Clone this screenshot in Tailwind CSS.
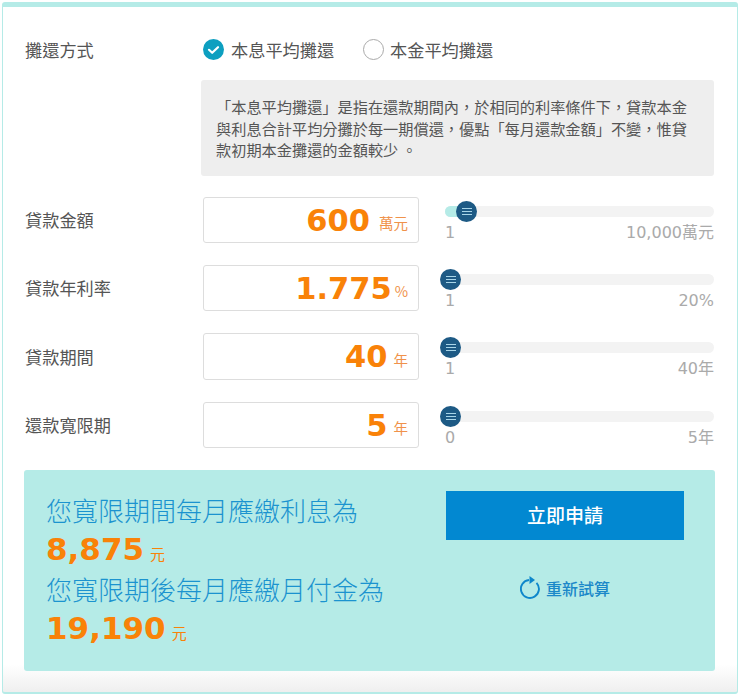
<!DOCTYPE html>
<html lang="zh-Hant">
<head>
    <meta charset="UTF-8">
    <meta name="viewport" content="width=device-width, initial-scale=1.0">
    <title>貸款試算</title>
    <script src="https://cdn.jsdelivr.net/npm/@tailwindcss/browser@4"></script>
</head>
<body class="bg-white font-['Noto_Sans_CJK_TC','Noto_Sans_CJK_SC',sans-serif] text-[#555] overflow-hidden">
    <div class="ml-[2px] mt-[2px] w-[736px] h-[692px] rounded-[3px] border border-[#b5ebe7] border-t-[5px] border-b-2 bg-gradient-to-b from-white from-[96%] to-[#efefef] px-[21px] pt-[28px]">

        <!-- repayment type -->
        <div class="flex items-center h-[30px]">
            <div class="w-[179px] pl-[1px] text-[17.2px]">攤還方式</div>
            <label class="flex items-center gap-[7px] text-[17.2px] w-[160px]">
                <svg class="w-[21px] h-[21px]" viewBox="0 0 21 21">
                    <circle cx="10.5" cy="10.5" r="10.5" fill="#0d9fc0"/>
                    <path d="M6 10.8l3.2 3 5.8-5.6" fill="none" stroke="#fff" stroke-width="2.2" stroke-linecap="round" stroke-linejoin="round"/>
                </svg>
                本息平均攤還
            </label>
            <label class="flex items-center gap-[6px] text-[17.2px]">
                <span class="w-[21px] h-[21px] rounded-full border border-[#aaa] bg-white"></span>
                本金平均攤還
            </label>
        </div>
        <div class="ml-[177px] mt-[15px] w-[513px] h-[96px] rounded-[3px] bg-[#eeeeee] pl-[15px] pr-[24px] pt-[16px] text-[15.2px] leading-[21.5px]">
            「本息平均攤還」是指在還款期間內，於相同的利率條件下，貸款本金與利息合計平均分攤於每一期償還，優點「每月還款金額」不變，惟貸款初期本金攤還的金額較少 。
        </div>

        <!-- inputs -->
        <div class="mt-[20.8px] flex flex-col gap-[22px]">
            <div class="flex items-center h-[46.3px]">
                <div class="w-[179px] pl-[1px] text-[17.2px]">貸款金額</div>
                <div class="w-[216px] h-full rounded-[3px] border border-[#ddd] flex items-center justify-end pr-[10px]">
                    <span class="pt-[2px] font-['DejaVu_Sans'] font-bold text-[30.5px] text-[#f98208] leading-none">600</span>
                    <span class="ml-[9px] mt-[6px] text-[14.5px] text-[#f0924a]">萬元</span>
                </div>
                <div class="ml-[26px] w-[269px] self-start mt-[9px]">
                    <div class="relative h-[11px] rounded-full bg-[#f3f3f3]">
                        <div class="w-[22px] h-[11px] rounded-full bg-[#b5ebe7]"></div>
                        <div class="absolute left-[11px] top-[-5px] w-[21px] h-[21px] rounded-full bg-[#1d5a85] flex flex-col items-center justify-center gap-[2px]">
                            <i class="block w-[10px] h-px bg-[#a8d5e8]"></i><i class="block w-[10px] h-px bg-[#a8d5e8]"></i><i class="block w-[10px] h-px bg-[#a8d5e8]"></i>
                        </div>
                    </div>
                    <div class="flex justify-between mt-[6px] font-['DejaVu_Sans','Noto_Sans_CJK_TC'] text-[16px] leading-[20px] text-[#aaa]"><span>1</span><span>10,000萬元</span></div>
                </div>
            </div>
            <div class="flex items-center h-[46.3px]">
                <div class="w-[179px] pl-[1px] text-[17.2px]">貸款年利率</div>
                <div class="w-[216px] h-full rounded-[3px] border border-[#ddd] flex items-center justify-end pr-[10px]">
                    <span class="pt-[2px] font-['DejaVu_Sans'] font-bold text-[30.5px] text-[#f98208] leading-none">1.775</span>
                    <span class="ml-[3px] mt-[6px] text-[14.5px] text-[#f0924a]">%</span>
                </div>
                <div class="ml-[26px] w-[269px] self-start mt-[9px]">
                    <div class="relative h-[11px] rounded-full bg-[#f3f3f3]">
                        <div class="absolute left-[-5px] top-[-5px] w-[21px] h-[21px] rounded-full bg-[#1d5a85] flex flex-col items-center justify-center gap-[2px]">
                            <i class="block w-[10px] h-px bg-[#a8d5e8]"></i><i class="block w-[10px] h-px bg-[#a8d5e8]"></i><i class="block w-[10px] h-px bg-[#a8d5e8]"></i>
                        </div>
                    </div>
                    <div class="flex justify-between mt-[6px] font-['DejaVu_Sans','Noto_Sans_CJK_TC'] text-[16px] leading-[20px] text-[#aaa]"><span>1</span><span>20%</span></div>
                </div>
            </div>
            <div class="flex items-center h-[46.3px]">
                <div class="w-[179px] pl-[1px] text-[17.2px]">貸款期間</div>
                <div class="w-[216px] h-full rounded-[3px] border border-[#ddd] flex items-center justify-end pr-[10px]">
                    <span class="pt-[2px] font-['DejaVu_Sans'] font-bold text-[30.5px] text-[#f98208] leading-none">40</span>
                    <span class="ml-[6px] mt-[6px] text-[14.5px] text-[#f0924a]">年</span>
                </div>
                <div class="ml-[26px] w-[269px] self-start mt-[9px]">
                    <div class="relative h-[11px] rounded-full bg-[#f3f3f3]">
                        <div class="absolute left-[-5px] top-[-5px] w-[21px] h-[21px] rounded-full bg-[#1d5a85] flex flex-col items-center justify-center gap-[2px]">
                            <i class="block w-[10px] h-px bg-[#a8d5e8]"></i><i class="block w-[10px] h-px bg-[#a8d5e8]"></i><i class="block w-[10px] h-px bg-[#a8d5e8]"></i>
                        </div>
                    </div>
                    <div class="flex justify-between mt-[6px] font-['DejaVu_Sans','Noto_Sans_CJK_TC'] text-[16px] leading-[20px] text-[#aaa]"><span>1</span><span>40年</span></div>
                </div>
            </div>
            <div class="flex items-center h-[46.3px]">
                <div class="w-[179px] pl-[1px] text-[17.2px]">還款寬限期</div>
                <div class="w-[216px] h-full rounded-[3px] border border-[#ddd] flex items-center justify-end pr-[10px]">
                    <span class="pt-[2px] font-['DejaVu_Sans'] font-bold text-[30.5px] text-[#f98208] leading-none">5</span>
                    <span class="ml-[6px] mt-[6px] text-[14.5px] text-[#f0924a]">年</span>
                </div>
                <div class="ml-[26px] w-[269px] self-start mt-[9px]">
                    <div class="relative h-[11px] rounded-full bg-[#f3f3f3]">
                        <div class="absolute left-[-5px] top-[-5px] w-[21px] h-[21px] rounded-full bg-[#1d5a85] flex flex-col items-center justify-center gap-[2px]">
                            <i class="block w-[10px] h-px bg-[#a8d5e8]"></i><i class="block w-[10px] h-px bg-[#a8d5e8]"></i><i class="block w-[10px] h-px bg-[#a8d5e8]"></i>
                        </div>
                    </div>
                    <div class="flex justify-between mt-[6px] font-['DejaVu_Sans','Noto_Sans_CJK_TC'] text-[16px] leading-[20px] text-[#aaa]"><span>0</span><span>5年</span></div>
                </div>
            </div>
        </div>

        <!-- result -->
        <div class="mt-[22px] w-[691px] h-[201px] rounded-[3px] bg-[#b5ebe7] flex">
            <div class="w-[422px] pl-[22px] pt-[20px]">
                <div class="text-[26px] leading-[40px] font-light text-[#1b93cf]">您寬限期間每月應繳利息為</div>
                <div class="h-[39px] flex items-baseline text-[#f98208]"><span class="font-['DejaVu_Sans'] font-bold text-[31px] leading-[39px]">8,875</span><span class="ml-[6px] text-[15px]">元</span></div>
                <div class="text-[26px] leading-[40px] font-light text-[#1b93cf]">您寬限期後每月應繳月付金為</div>
                <div class="h-[39px] flex items-baseline text-[#f98208]"><span class="font-['DejaVu_Sans'] font-bold text-[31px] leading-[39px]">19,190</span><span class="ml-[6px] text-[15px]">元</span></div>
            </div>
            <div class="w-[238px] pt-[21px]">
                <div class="h-[49px] bg-[#0288d1] flex items-center justify-center text-white text-[19px] font-medium">立即申請</div>
                <div class="mt-[36px] flex items-center justify-center gap-[6px] text-[16px] font-medium text-[#1b88c9]">
                    <svg class="w-[20px] h-[23px]" viewBox="0 0 20 23" fill="none">
                        <path d="M9 4A9 9 0 1 0 16.5 6.8" stroke="#0f87cb" stroke-width="1.9"/>
                        <path d="M9.5 0l5.5 4-5.5 4z" fill="#0f87cb"/>
                    </svg>
                    重新試算
                </div>
            </div>
        </div>
    </div>
</body>
</html>
